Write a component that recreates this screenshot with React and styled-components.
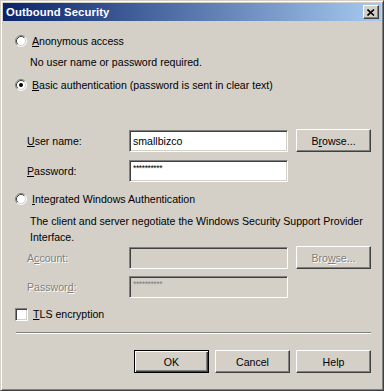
import React from 'react';
import styled, { createGlobalStyle } from 'styled-components';

const Global = createGlobalStyle`
  html, body {
    margin: 0;
    padding: 0;
    background: #d4d0c8;
  }
  body {
    font-family: "Liberation Sans", Arial, sans-serif;
    font-size: 10.6px;
    color: #000;
  }
`;

const Window = styled.div`
  width: 384px;
  height: 391px;
  box-sizing: border-box;
  background: #d4d0c8;
  border: 1px solid;
  border-color: #d4d0c8 #404040 #404040 #d4d0c8;
  box-shadow: inset 1px 1px #fff, inset -1px -1px #808080;
  padding: 2px;
  display: flex;
  flex-direction: column;
`;

const TitleBar = styled.div`
  height: 18px;
  background: linear-gradient(to right, #0a246a, #a6caf0);
  display: flex;
  align-items: center;
  justify-content: space-between;
  padding: 0 2px 0 3px;
`;

const Title = styled.span`
  color: #fff;
  font-weight: bold;
  font-size: 11.3px;
  letter-spacing: 0.1px;
`;

const CloseButton = styled.div`
  width: 16px;
  height: 14px;
  box-sizing: border-box;
  background: #d4d0c8;
  border: 1px solid;
  border-color: #fff #404040 #404040 #fff;
  box-shadow: inset -1px -1px #808080;
  display: flex;
  align-items: center;
  justify-content: center;
`;

const Content = styled.div`
  display: flex;
  flex-direction: column;
  padding: 12px 10px 0 12px;
`;

const OptionRow = styled.label`
  display: flex;
  align-items: center;
  height: 16px;
  gap: 5px;
  margin-top: ${p => p.$mt || 0}px;
`;

const Desc = styled.div`
  margin-left: 15px;
  line-height: 16px;
  margin-top: ${p => p.$mt || 0}px;
`;

const Fields = styled.div`
  display: grid;
  grid-template-columns: 94px 159px 75px;
  column-gap: 8px;
  row-gap: ${p => p.$rowGap}px;
  margin-left: 12px;
  margin-top: ${p => p.$mt || 0}px;
  align-items: center;
`;

const FieldLabel = styled.span`
  color: ${p => (p.$disabled ? '#808080' : '#000')};
  text-shadow: ${p => (p.$disabled ? '1px 1px #fff' : 'none')};
`;

const TextBox = styled.div`
  height: 22px;
  box-sizing: border-box;
  background: ${p => (p.$disabled ? '#d4d0c8' : '#fff')};
  border: 1px solid;
  border-color: #808080 #fff #fff #808080;
  box-shadow: inset 1px 1px #404040, inset -1px -1px #d4d0c8;
  padding: 0 3px;
  display: flex;
  align-items: center;
`;

const Mask = styled.span`
  font-size: 8.5px;
  letter-spacing: -0.4px;
  color: ${p => (p.$disabled ? '#808080' : '#000')};
  align-self: flex-start;
  margin-top: 2px;
`;

const Button = styled.button`
  width: 75px;
  height: 23px;
  box-sizing: border-box;
  font: inherit;
  background: #d4d0c8;
  color: ${p => (p.$disabled ? '#808080' : '#000')};
  text-shadow: ${p => (p.$disabled ? '1px 1px #fff' : 'none')};
  border: 1px solid;
  border-color: ${p => (p.$default ? '#000' : '#fff #404040 #404040 #fff')};
  box-shadow: ${p =>
    p.$default
      ? 'inset 1px 1px #fff, inset -1px -1px #404040, inset -2px -2px #808080'
      : 'inset -1px -1px #808080'};
  padding: 0;
  cursor: default;
`;

const Separator = styled.div`
  height: 0;
  border-top: 1px solid #808080;
  border-bottom: 1px solid #fff;
  margin: 10px 0 0 1px;
`;

const ButtonBar = styled.div`
  display: flex;
  justify-content: flex-end;
  gap: 6px;
  margin-top: 16px;
`;

const CheckBox = styled.span`
  width: 13px;
  height: 13px;
  box-sizing: border-box;
  background: #fff;
  border: 1px solid;
  border-color: #808080 #fff #fff #808080;
  box-shadow: inset 1px 1px #404040, inset -1px -1px #d4d0c8;
  flex: none;
`;

const Radio = ({ checked }) => (
  <svg width="12" height="12" viewBox="0 0 12 12" style={{ flex: 'none' }}>
    <circle cx="6" cy="6" r="5" fill="#fff" />
    <path d="M2.11 9.89 A5.5 5.5 0 0 1 9.89 2.11" stroke="#808080" fill="none" />
    <path d="M9.89 2.11 A5.5 5.5 0 0 1 2.11 9.89" stroke="#fff" fill="none" />
    <path d="M2.82 9.18 A4.5 4.5 0 0 1 9.18 2.82" stroke="#404040" fill="none" />
    <path d="M9.18 2.82 A4.5 4.5 0 0 1 2.82 9.18" stroke="#d4d0c8" fill="none" />
    {checked && <circle cx="6" cy="6" r="2" fill="#000" />}
  </svg>
);

const U = styled.u`
  text-decoration: underline;
  text-underline-offset: 1px;
`;

export default function App() {
  return (
    <>
      <Global />
      <Window>
        <TitleBar>
          <Title>Outbound Security</Title>
          <CloseButton>
            <svg width="8" height="7" viewBox="0 0 8 7">
              <path d="M0.5 0.5 L7 6.5 M7 0.5 L0.5 6.5" stroke="#000" strokeWidth="1.6" />
            </svg>
          </CloseButton>
        </TitleBar>
        <Content>
          <OptionRow>
            <Radio />
            <span><U>A</U>nonymous access</span>
          </OptionRow>
          <Desc $mt={5}>No user name or password required.</Desc>
          <OptionRow $mt={7}>
            <Radio checked />
            <span><U>B</U>asic authentication (password is sent in clear text)</span>
          </OptionRow>

          <Fields $mt={36} $rowGap={8}>
            <FieldLabel><U>U</U>ser name:</FieldLabel>
            <TextBox>smallbizco</TextBox>
            <Button>B<U>r</U>owse...</Button>
            <FieldLabel><U>P</U>assword:</FieldLabel>
            <TextBox><Mask>**********</Mask></TextBox>
            <span />
          </Fields>

          <OptionRow $mt={9}>
            <Radio />
            <span><U>I</U>ntegrated Windows Authentication</span>
          </OptionRow>
          <Desc $mt={6}>
            The client and server negotiate the Windows Security Support Provider
            <br />
            Interface.
          </Desc>

          <Fields $mt={1} $rowGap={7}>
            <FieldLabel $disabled>A<U>c</U>count:</FieldLabel>
            <TextBox $disabled />
            <Button $disabled>Bro<U>w</U>se...</Button>
            <FieldLabel $disabled>Passwor<U>d</U>:</FieldLabel>
            <TextBox $disabled><Mask $disabled>**********</Mask></TextBox>
            <span />
          </Fields>

          <OptionRow $mt={8}>
            <CheckBox />
            <span><U>T</U>LS encryption</span>
          </OptionRow>

          <Separator />

          <ButtonBar>
            <Button $default>OK</Button>
            <Button>Cancel</Button>
            <Button>Help</Button>
          </ButtonBar>
        </Content>
      </Window>
    </>
  );
}
